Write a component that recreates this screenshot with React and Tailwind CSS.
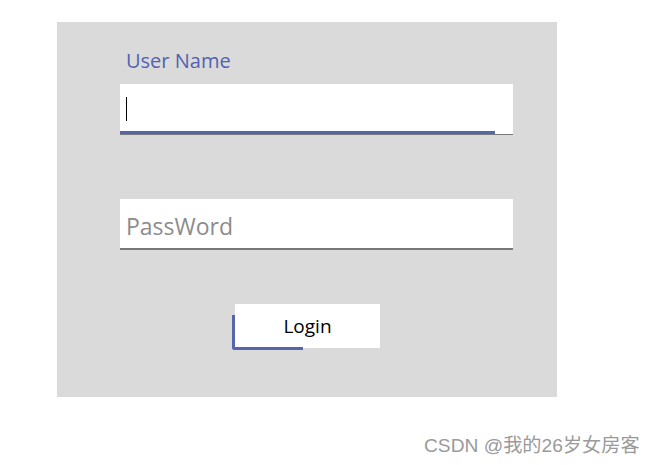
export default function App() {
  const font = { fontFamily: '"Open Sans", "Noto Sans", sans-serif' };
  return (
    <div className="w-[654px] h-[465px] bg-white relative" style={font}>
      <div className="pt-[22px] pl-[57px]">
        <div className="w-[500px] h-[375px] bg-[#dadada] flex flex-col pl-[63px]">
          <div className="mt-[25px] ml-[6px] h-[28px] text-[20px] leading-[28px] text-[#5163b0]">User Name</div>
          <div className="mt-[9px] relative w-[393px] h-[51px] bg-white border-b border-[#7a7a7a] flex items-center">
            <div className="ml-[6px] w-px h-[24px] bg-black"></div>
            <div className="absolute left-0 bottom-0 w-[375px] h-[3px] bg-[#5566ad]"></div>
          </div>
          <div className="mt-[64px] w-[393px] h-[51px] bg-white border-b-2 border-[#777] flex items-center pt-[5px]">
            <span className="ml-[6px] text-[23px] text-[#8c8c8c] leading-none">PassWord</span>
          </div>
          <div className="mt-[54px] ml-[115px] relative w-[145px] h-[44px] bg-white flex items-center justify-center">
            <span className="text-[19px] text-black leading-none">Login</span>
            <div className="absolute left-[-3px] top-[11px] w-[71px] h-[35px] border-l-[3px] border-b-[3px] border-[#5566ad] rounded-bl-[3px]"></div>
          </div>
        </div>
      </div>
      <div className="absolute left-[424px] top-[434px] text-[19.2px] text-[#9a9a9a] leading-[24px] whitespace-nowrap" style={{ fontFamily: '"Liberation Sans", "Noto Sans CJK SC", sans-serif' }}>
        CSDN @我的26岁女房客
      </div>
    </div>
  );
}
